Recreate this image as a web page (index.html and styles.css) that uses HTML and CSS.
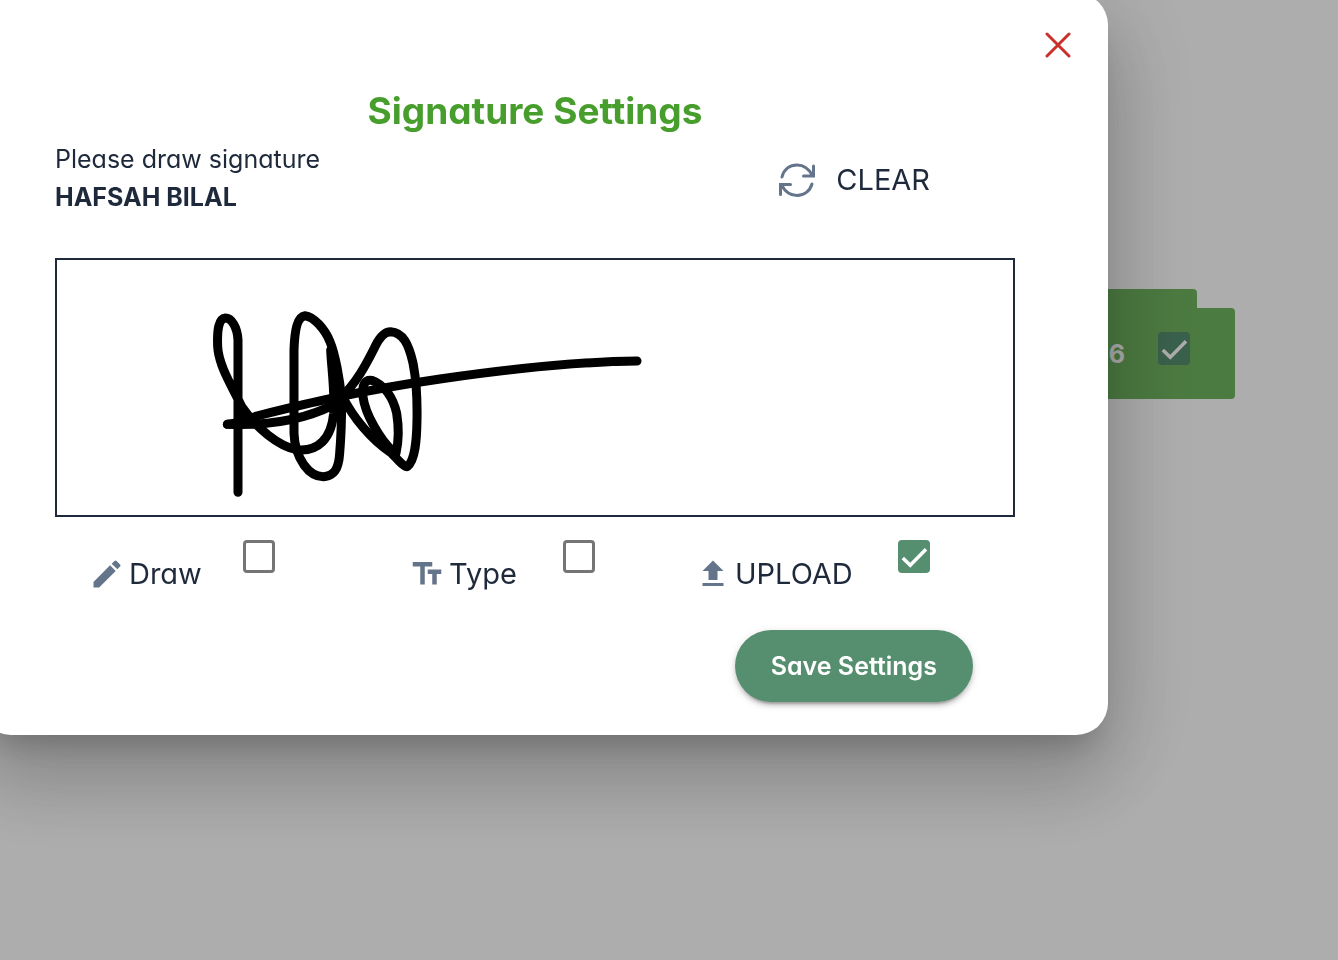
FILE: index.html
```html
<!DOCTYPE html>
<html lang="en">
<head>
  <meta charset="UTF-8">
  <title>Signature Settings</title>
  <link rel="stylesheet" href="styles.css">
</head>
<body>

<main class="page">
  <div class="folder">
    <div class="folder-tab"></div>
    <div class="folder-body">
      <label for="folderCheck">26</label>
      <input type="checkbox" id="folderCheck" class="checkbox" checked>
    </div>
  </div>
</main>

<div class="backdrop">
  <form class="dialog" role="dialog" aria-labelledby="dialogTitle">
    <button type="button" class="close-btn" aria-label="Close">
      <svg viewBox="0 0 26 26"><path d="M2 2l22 22M24 2L2 24"/></svg>
    </button>

    <div class="content">
      <h2 id="dialogTitle">Signature Settings</h2>

      <div class="top-row">
        <div class="signer">
          <p>Please draw signature</p>
          <p class="signer-name">HAFSAH BILAL</p>
        </div>
        <button type="button" class="clear-btn">
          <svg viewBox="0 0 40 40"><path d="M5 17C7 9 13 5 20 5S32 9 35.500 15.500M36.500 6V16H26.500M35 24C33 31 27 35.500 20 35.500S8 31.500 4.500 25M3.500 34.500V24.500H13.500"/></svg>
          CLEAR
        </button>
      </div>

      <div class="signature-box">
        <svg viewBox="0 0 2868 765" role="img" aria-label="Signature">
          <g transform="translate(399 90)">
            <path d="M144 607V150C142 112 125 84 106 84C86 86 81 120 83 170C86 228 128 292 155 350C200 415 265 468 320 479C385 486 424 445 431 370C435 300 424 230 422 180"/>
            <path d="M345 77C322 80 314 120 312 180V430C313 465 325 500 342 525C360 550 378 560 400 560C432 558 446 538 449 490C454 430 455 390 455 330C450 270 435 190 420 155C405 118 372 80 345 77Z"/>
            <path d="M445 330C500 280 530 220 555 170C570 138 585 125 602 125C640 127 656 165 668 215C680 270 682 330 681 390C680 450 676 510 652 530C640 530 620 505 605 490C545 450 490 385 455 315"/>
            <path d="M610 485C570 450 525 370 519 320C515 285 525 268 545 271C585 285 610 325 620 370C628 420 626 455 618 490"/>
            <path d="M112 403C150 400 170 390 200 378C280 358 360 338 440 322C540 300 640 283 750 267C950 238 1150 215 1341 213"/>
            <path d="M112 403C240 408 350 388 440 340"/>
            <path d="M150 350L160 400L195 390M425 190L442 320"/>
          </g>
        </svg>
      </div>

      <div class="options">
        <div class="option">
          <label for="optDraw">
            <svg viewBox="0 0 24 24"><path d="M3 17.250V21h3.750L17.810 9.940l-3.750-3.750L3 17.250zM20.710 7.040a1 1 0 0 0 0-1.410l-2.340-2.340a1 1 0 0 0-1.410 0l-1.830 1.830 3.750 3.750 1.830-1.830z"/></svg>
            Draw
          </label>
          <input type="checkbox" id="optDraw" class="checkbox">
        </div>
        <div class="option">
          <label for="optType">
            <svg viewBox="0 0 24 24"><path d="M2.500 4v3h5v12h3V7h5V4h-13zm19 5h-9v3h3v7h3v-7h3V9z"/></svg>
            Type
          </label>
          <input type="checkbox" id="optType" class="checkbox">
        </div>
        <div class="option option-upload">
          <label for="optUpload">
            <svg viewBox="0 0 24 24"><path d="M5 20h14v-2H5v2zm0-10h4v6h6v-6h4l-7-7-7 7z"/></svg>
            UPLOAD
          </label>
          <input type="checkbox" id="optUpload" class="checkbox" checked>
        </div>
      </div>

      <div class="actions">
        <button type="submit" class="save-btn">Save Settings</button>
      </div>
    </div>
  </form>
</div>

</body>
</html>
```

FILE: styles.css
```css
* {
  box-sizing: border-box;
}
body {
  margin: 0;
  min-height: 100vh;
  font-family: Inter, "Liberation Sans", sans-serif;
  font-feature-settings: "cv11";
  font-size: 25px;
  color: #1e293b;
  background: #fff;
  overflow: hidden;
}
h2, p {
  margin: 0;
}
button {
  padding: 0;
  border: none;
  background: none;
  color: inherit;
  font: inherit;
  font-feature-settings: inherit;
  cursor: pointer;
}
svg {
  display: block;
  flex: none;
}

/* page behind the dialog */
.page {
  padding: 289px 103px 0 0;
}
.folder {
  width: 220px;
  margin-left: auto;
}
.folder-tab {
  height: 19px;
  margin-right: 38px;
  border-radius: 4px 4px 0 0;
  background: #70b560;
}
.folder-body {
  display: flex;
  justify-content: flex-end;
  height: 91px;
  padding: 24px 45px 0 0;
  gap: 33px;
  border-radius: 0 4px 4px 4px;
  background: #70b560;
  color: #fff;
  font-size: 25px;
  font-weight: 700;
  line-height: 44px;
}

.checkbox {
  appearance: none;
  flex: none;
  width: 32px;
  height: 33px;
  margin: 0;
  border: 3px solid #757575;
  border-radius: 4px;
  cursor: pointer;
}
.checkbox:checked {
  border: none;
  background: #568f6f url("data:image/svg+xml,%3Csvg xmlns='http://www.w3.org/2000/svg' viewBox='0 0 24 24'%3E%3Cpath fill='none' stroke='white' stroke-width='2.600' d='M3.600 12.700L9.200 18.200L21 6.200'/%3E%3C/svg%3E") center / 32px no-repeat;
}

.backdrop {
  position: fixed;
  inset: 0;
  padding-right: 230px;
  background: rgba(0,0,0,0.32);
}
.dialog {
  margin: -7px 0 0 -21px;
  padding: 39px 37px 33px 76px;
  border-radius: 32px;
  background: #fff;
  box-shadow: 0 22px 30px -14px rgba(0,0,0,0.2), 0 48px 76px 6px rgba(0,0,0,0.14), 0 18px 92px 16px rgba(0,0,0,0.12);
}
.close-btn {
  display: block;
  margin-left: auto;
}
.close-btn svg {
  width: 26px;
  height: 26px;
  fill: none;
  stroke: #c9302c;
  stroke-width: 3;
  stroke-linecap: round;
}
.content {
  margin-right: 56px;
}
h2 {
  margin-top: 29px;
  color: #489e2d;
  font-size: 37px;
  font-weight: 700;
  line-height: 48px;
  text-align: center;
}
.top-row {
  display: flex;
  justify-content: space-between;
  align-items: center;
  height: 123px;
  padding: 0 85px 38px 0;
}
.signer {
  line-height: 38px;
}
.signer-name {
  font-weight: 700;
}
.clear-btn {
  display: flex;
  align-items: center;
  gap: 19px;
  padding-top: 4px;
  font-size: 29px;
}
.clear-btn svg {
  width: 40px;
  height: 40px;
  fill: none;
  stroke: #64748b;
  stroke-width: 3;
  stroke-linecap: round;
}
.signature-box {
  border: 2px solid #1e293b;
}
.signature-box svg {
  width: 100%;
  fill: none;
  stroke: #000;
  stroke-width: 27;
  stroke-linecap: round;
  stroke-linejoin: round;
}
.options {
  display: grid;
  grid-template-columns: 320fr 286fr 316fr;
  padding: 23px 0 0 38px;
}
.option {
  display: flex;
  justify-content: space-between;
  width: 182px;
}
.option-upload {
  width: 231px;
}
.option label {
  display: flex;
  align-items: center;
  gap: 4px;
  height: 67px;
  margin-left: -4px;
  font-size: 29px;
}
.option label svg {
  width: 36px;
  height: 36px;
  fill: #64748b;
}
.actions {
  display: flex;
  justify-content: flex-end;
  padding: 23px 42px 0 0;
}
.save-btn {
  height: 72px;
  padding: 0 36px;
  border-radius: 36px;
  background: #568f6f;
  box-shadow: 0 6px 2px -4px rgba(0,0,0,0.2), 0 4px 4px rgba(0,0,0,0.14), 0 2px 10px rgba(0,0,0,0.12);
  color: #fff;
  font-weight: 600;
}
```
